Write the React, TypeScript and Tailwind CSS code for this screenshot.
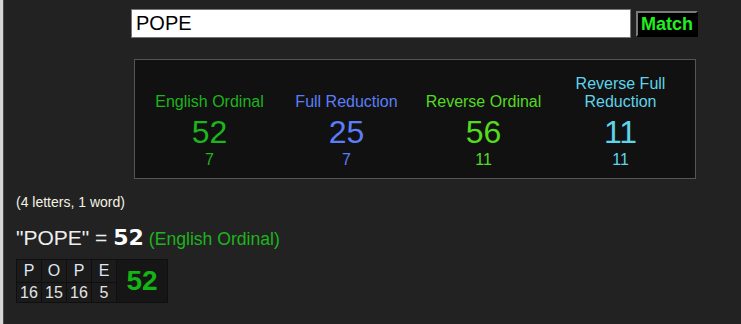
import React from 'react';

const ciphers = [
  { name: 'English Ordinal', value: 52, reduced: 7, color: 'text-[#1db41d]' },
  { name: 'Full Reduction', value: 25, reduced: 7, color: 'text-[#5b7ef8]' },
  { name: 'Reverse Ordinal', value: 56, reduced: 11, color: 'text-[#55da22]' },
  { name: 'Reverse Full Reduction', value: 11, reduced: 11, color: 'text-[#5fd3ea]' },
];

const letters = [
  { ch: 'P', n: 16 },
  { ch: 'O', n: 15 },
  { ch: 'P', n: 16 },
  { ch: 'E', n: 5 },
];

const App: React.FC = () => {
  return (
    <div className="flex min-h-screen w-full bg-[#222] font-['Liberation_Sans',Arial,sans-serif]">
      {/* left edge strip */}
      <div className="w-[3px] shrink-0 bg-[#d6d6d6]" />
      <div className="w-px shrink-0 bg-[#4a4a4a]" />

      <div className="flex flex-1 flex-col">
        {/* Search row */}
        <div className="ml-[127px] mt-[9px] flex items-center gap-[5px]">
          <input
            value="POPE"
            readOnly
            className="h-[29px] w-[500px] border border-[#767676] bg-white pl-[4px] text-[20px] leading-[27px] text-black outline-none"
          />
          <button className="flex h-[26px] w-[62px] items-center justify-center border-2 border-t-[#7a7a7a] border-l-[#7a7a7a] border-r-black border-b-black bg-black text-[18px] font-bold leading-none text-[#22ee22]">
            Match
          </button>
        </div>

        {/* Cipher panel */}
        <div className="ml-[130px] mt-[21px] w-[562px] border border-[#555] bg-[#111] px-[6px] pb-[9px] pt-[15px]">
          <div className="grid grid-cols-4">
            {ciphers.map(c => (
              <div key={c.name} className={`flex flex-col items-center justify-end text-center ${c.color}`}>
                <div className="text-[16px] leading-[18px]">{c.name}</div>
                <div className="mt-[3px] text-[32px] leading-[37px]">{c.value}</div>
                <div className="text-[16px] leading-[18px]">{c.reduced}</div>
              </div>
            ))}
          </div>
        </div>

        {/* Word info */}
        <div className="ml-[12px] mt-[15px] text-[14px] leading-[16px] text-[#f2f2e4]">(4 letters, 1 word)</div>

        <div className="ml-[12px] mt-[14px] flex items-baseline leading-[28px]">
          <span className="whitespace-pre text-[21px] text-[#eee]">"POPE" = </span>
          <span className="font-['DejaVu_Sans',sans-serif] text-[22px] font-bold text-white">52</span>
          <span className="ml-[5px] text-[17.6px] text-[#1db41d]">(English Ordinal)</span>
        </div>

        {/* Letter breakdown */}
        <div className="ml-[12px] mt-[6px]">
          <table className="border-collapse bg-[#161616]">
            <tbody>
              <tr>
                {letters.map((l, i) => (
                  <td
                    key={i}
                    className="h-[23px] w-[25px] border border-[#0f0f0f] bg-[#1b1b1b] p-0 text-center text-[16px] leading-[20px] text-[#dde8f2]"
                  >
                    {l.ch}
                  </td>
                ))}
                <td
                  rowSpan={2}
                  className="w-[51px] border border-[#0f0f0f] bg-[#161616] p-0 text-center text-[28px] font-bold leading-[32px] text-[#13b413]"
                >
                  52
                </td>
              </tr>
              <tr>
                {letters.map((l, i) => (
                  <td
                    key={i}
                    className="h-[20px] border border-[#0f0f0f] bg-[#1b1b1b] p-0 text-center text-[16px] leading-[18px] text-[#e4e4e4]"
                  >
                    {l.n}
                  </td>
                ))}
              </tr>
            </tbody>
          </table>
        </div>
      </div>
    </div>
  );
};

export default App;
